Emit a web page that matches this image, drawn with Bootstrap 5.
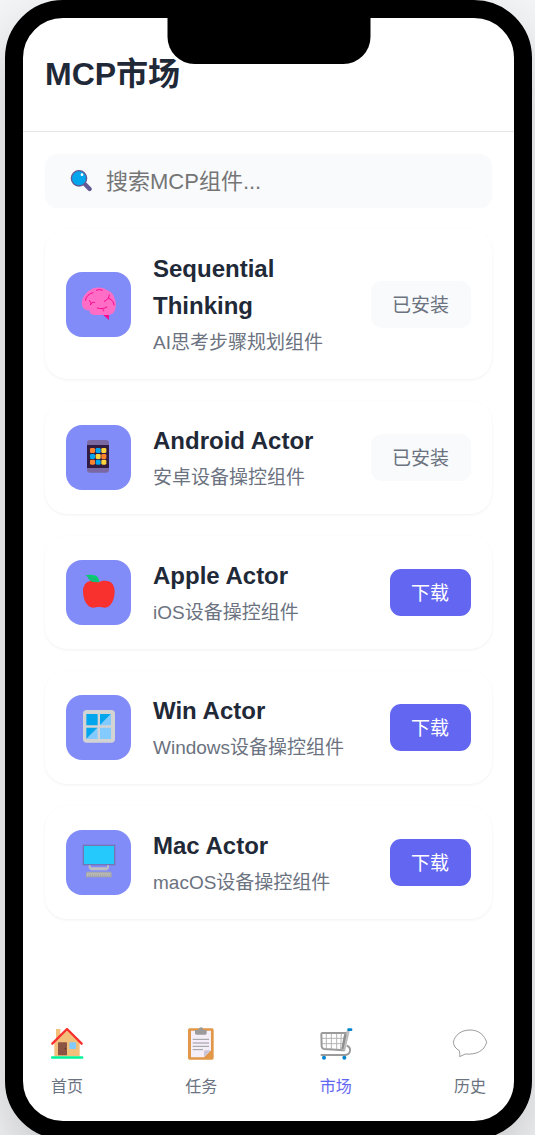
<!DOCTYPE html>
<html lang="zh-CN">
<head>
<meta charset="utf-8">
<meta name="viewport" content="width=device-width, initial-scale=1">
<title>MCP市场</title>
<link href="https://cdn.jsdelivr.net/npm/bootstrap@5.3.0/dist/css/bootstrap.min.css" rel="stylesheet">
<style>
  body { background: #f3f4f6; color: #1f2937; font-family: "Liberation Sans", "Noto Sans CJK SC", sans-serif; height: 100vh; }
  .phone { background: #fff; border: 18px solid #000; border-radius: 58px; margin: 0 3px 0 5px; min-height: calc(100vh + 4px); box-shadow: 0 27px 54px rgba(0,0,0,.18); }
  .notch { background: #000; width: 203px; height: 46px; border-radius: 0 0 27px 27px; }
  .app-head { padding: 30px 22px 31px; border-bottom: 1px solid #e5e7eb; }
  .app-head h1 { font-size: 32px; line-height: 52px; font-weight: 700; }
  .app-main { padding: 22px 22px 0; }
  .search-box { background: #f8fafc; border-radius: 12px; height: 54px; padding: 0 25px; gap: 12px; margin-bottom: 21px; }
  .search-box input { font-size: 22px; color: #1f2937; outline: 0; min-width: 0; }
  .search-box input::placeholder { color: #757575; }
  .item-list { gap: 22px; }
  .item { border-radius: 22px; padding: 21px; gap: 22px; box-shadow: 0 1px 3px rgba(0,0,0,.06); }
  .tile { width: 65px; height: 65px; border-radius: 16px; background: #818cf8; }
  .item h2 { font-size: 24px; line-height: 37px; font-weight: 700; margin: 0 0 4px; }
  .item p { font-size: 19px; line-height: 30px; color: #6b7280; }
  .act { border: 0; border-radius: 11px; font-size: 19px; line-height: 29px; padding: 10px 22px 8px 21px; background: #6366f1; color: #fff; white-space: nowrap; }
  .act:disabled { background: #f8fafc; color: #6b7280; }
  .tabs { padding: 0 26px 22px; }
  .tabs a { width: 36px; gap: 14px; font-size: 16px; line-height: 24px; color: #6b7280; }
  .tabs a.active { color: #6366f1; }
</style>
</head>
<body class="overflow-hidden">
<div class="phone position-relative d-flex flex-column">
  <div class="notch position-absolute top-0 start-50 translate-middle-x"></div>
  <header class="app-head"><h1 class="m-0">MCP市场</h1></header>

  <main class="app-main flex-grow-1">
    <label class="search-box d-flex align-items-center">
      <svg class="flex-shrink-0" width="24" height="24" viewBox="90 57 72 72" aria-hidden="true">
        <path d="M135 103l14 14" stroke="#635994" stroke-width="13" stroke-linecap="round"/>
        <circle cx="117" cy="85" r="23" fill="#00a6ed" stroke="#635994" stroke-width="4"/>
        <circle cx="126" cy="74" r="4" fill="#fff"/>
      </svg>
      <input type="text" class="flex-grow-1 border-0 bg-transparent p-0" placeholder="搜索MCP组件..." aria-label="搜索MCP组件">
    </label>

    <div class="item-list d-flex flex-column">
      <article class="item d-flex align-items-center">
        <svg class="tile flex-shrink-0" viewBox="18 21 195 195" aria-hidden="true">
          <path d="M127 148h20v17z" fill="#f70a8d"/>
          <path d="M67 124C62 106 73 84 91 75c16-11 38-9 50 1 13 4 22 15 23 26 5 10 5 22 1 32-3 11-12 16-22 16h-40c-9 0-14-5-15-14-10 1-18-3-21-12z" fill="#ff6dc6"/>
          <path d="M76 106c2-12 11-20 23-23M109 76c5-3 12-3 18 0M88 107c4 2 5 6 5 10M104 112c-6-1-11 2-13 7M148 90c-1 10-7 15-15 19M146 101c9 1 15 8 16 19M112 129c10 4 20 2 29-3M126 131c3 1 5 4 5 7" fill="none" stroke="#f70a8d" stroke-width="3" stroke-linecap="round"/>
        </svg>
        <div class="flex-grow-1"><h2>Sequential Thinking</h2><p class="m-0">AI思考步骤规划组件</p></div>
        <button type="button" class="act" disabled>已安装</button>
      </article>

      <article class="item d-flex align-items-center">
        <svg class="tile flex-shrink-0" viewBox="18 15 195 195" aria-hidden="true">
          <rect x="81" y="60" width="66" height="98" rx="9" fill="#7968a3"/>
          <path d="M81 75h66v69H81z" fill="#321b41"/>
          <g fill="#ff822d"><rect x="90" y="84" width="15" height="15" rx="4"/><rect x="124" y="102" width="15" height="15" rx="4"/><rect x="90" y="119" width="15" height="15" rx="4"/></g>
          <g fill="#00a6ed"><rect x="107" y="84" width="15" height="15" rx="4"/><rect x="90" y="102" width="15" height="15" rx="4"/><rect x="107" y="119" width="15" height="15" rx="4"/></g>
          <g fill="#ffd53d"><rect x="124" y="84" width="15" height="15" rx="4"/><rect x="107" y="102" width="15" height="15" rx="4"/><rect x="124" y="119" width="15" height="15" rx="4"/></g>
        </svg>
        <div class="flex-grow-1"><h2>Android Actor</h2><p class="m-0">安卓设备操控组件</p></div>
        <button type="button" class="act" disabled>已安装</button>
      </article>

      <article class="item d-flex align-items-center">
        <svg class="tile flex-shrink-0" viewBox="18 15 195 195" aria-hidden="true">
          <path d="M116 82c7-5 16-6 26-4 14 2 22 14 22 31 0 24-11 49-29 49-8 0-11-2-18-2s-10 2-18 2c-18 0-30-25-30-49 0-17 9-29 22-31 10-2 18-1 25 4z" fill="#f8312f"/>
          <path d="M76 61c7-2 19-2 27 0 9 2 14 10 15 20-15 2-27-1-32-10-2-5-5-8-10-10z" fill="#00d26a"/>
          <path d="M76 61c15 2 28 4 42 20-17 1-27-2-32-10-2-5-5-8-10-10z" fill="#14bd78"/>
        </svg>
        <div class="flex-grow-1"><h2>Apple Actor</h2><p class="m-0">iOS设备操控组件</p></div>
        <button type="button" class="act">下载</button>
      </article>

      <article class="item d-flex align-items-center">
        <svg class="tile flex-shrink-0" viewBox="18 15 195 195" aria-hidden="true">
          <rect x="69" y="60" width="96" height="98" rx="11" fill="#d3d3d3"/>
          <path d="M79 72h34v34H79zM120 72h33l-33 34zM79 113h34l-34 34z" fill="#00a6ed"/>
          <path d="M153 72v34h-33zM113 113v34H79zM120 113h33v34h-33z" fill="#83cbff"/>
        </svg>
        <div class="flex-grow-1"><h2>Win Actor</h2><p class="m-0">Windows设备操控组件</p></div>
        <button type="button" class="act">下载</button>
      </article>

      <article class="item d-flex align-items-center">
        <svg class="tile flex-shrink-0" viewBox="18 15 195 195" aria-hidden="true">
          <rect x="70" y="61" width="94" height="58" fill="#26c9fc" stroke="#7375b5" stroke-width="4"/>
          <path d="M86 121h6v6h49v-6h6v8q0 4-5 4v3H91v-3q-5 0-5-4z" fill="#bebebe"/>
          <path d="M81 140h71l3 4v13H78v-13z" fill="#a6a6a6"/>
          <path d="M82 145h69M80 150h73" stroke="#c8c8c8" stroke-width="3" stroke-dasharray="4 2"/>
        </svg>
        <div class="flex-grow-1"><h2>Mac Actor</h2><p class="m-0">macOS设备操控组件</p></div>
        <button type="button" class="act">下载</button>
      </article>
    </div>
  </main>

  <nav class="tabs d-flex justify-content-between" aria-label="主导航">
    <a href="#home" class="d-flex flex-column align-items-center text-decoration-none">
      <svg width="36" height="36" viewBox="57 30 108 108" aria-hidden="true">
        <path d="M78 42h13v30H78zM111 44l38 37v43H73V81z" fill="#f3c07b"/>
        <path d="M67 86l44-44 44 44" fill="none" stroke="#f8312f" stroke-width="7" stroke-linecap="round" stroke-linejoin="round"/>
        <rect x="84" y="82" width="27" height="39" rx="2" fill="#8c5543"/><circle cx="106" cy="101" r="2" fill="#4d2b22"/>
        <rect x="118" y="82" width="20" height="20" rx="1" fill="#83cbff"/>
        <rect x="63" y="124" width="97" height="7" rx="3" fill="#00f397"/>
      </svg><span class="text-nowrap">首页</span>
    </a>
    <a href="#tasks" class="d-flex flex-column align-items-center text-decoration-none">
      <svg width="36" height="36" viewBox="460 30 108 108" aria-hidden="true">
        <rect x="475" y="40" width="77" height="94" rx="5" fill="#e19747"/>
        <path d="M484 47h60v59l-21 21h-39z" fill="#f3eef8"/>
        <path d="M544 106h-17q-4 0-4 4v17z" fill="#cdc4d6"/>
        <path d="M496 45h10q1-8 8-8t7 8h10v10q0 4-4 4h-27q-4 0-4-4z" fill="#9b9b9b"/>
        <path d="M489 73h49M489 94h49M489 104h31" stroke="#9b9b9b" stroke-width="3"/><path d="M489 84h49" stroke="#bcb7c2" stroke-width="5"/>
      </svg><span class="text-nowrap">任务</span>
    </a>
    <a href="#market" class="active d-flex flex-column align-items-center text-decoration-none" aria-current="page">
      <svg width="36" height="36" viewBox="83 30 108 108" aria-hidden="true">
        <path d="M108 55v46M123 55v48M139 55v49M153 55l-2 48M94 70h72M95 86h68" fill="none" stroke="#b5b5b5" stroke-width="3"/>
        <path d="M169 54H97q-4 0-4 4l1 37q1 6 7 7l60 4z" fill="none" stroke="#9b9b9b" stroke-width="6" stroke-linejoin="round"/>
        <path d="M174 46l-14 60" stroke="#bebebe" stroke-width="9"/>
        <path d="M165 58l-9 44" stroke="#8e8e8e" stroke-width="7"/>
        <path d="M169 92c13 3 15 25-3 28H91" fill="none" stroke="#9b9b9b" stroke-width="6"/>
        <rect x="171" y="40" width="15" height="8" rx="3" fill="#0084ce"/>
        <circle cx="101" cy="128" r="6" fill="#0084ce"/><circle cx="162" cy="128" r="6" fill="#0084ce"/>
      </svg><span class="text-nowrap">市场</span>
    </a>
    <a href="#history" class="d-flex flex-column align-items-center text-decoration-none">
      <svg width="36" height="36" viewBox="486 30 108 108" aria-hidden="true">
        <path d="M540 45c28 0 44 17 50 37-7 25-30 38-64 35l-17 8c1-8 0-12-1-18-11-6-17-15-18-25 4-22 24-37 50-37z" fill="#fff" stroke="#9b9b9b" stroke-width="3" stroke-linejoin="round"/>
      </svg><span class="text-nowrap">历史</span>
    </a>
  </nav>
</div>
<script src="https://cdn.jsdelivr.net/npm/bootstrap@5.3.0/dist/js/bootstrap.bundle.min.js"></script>
</body>
</html>
